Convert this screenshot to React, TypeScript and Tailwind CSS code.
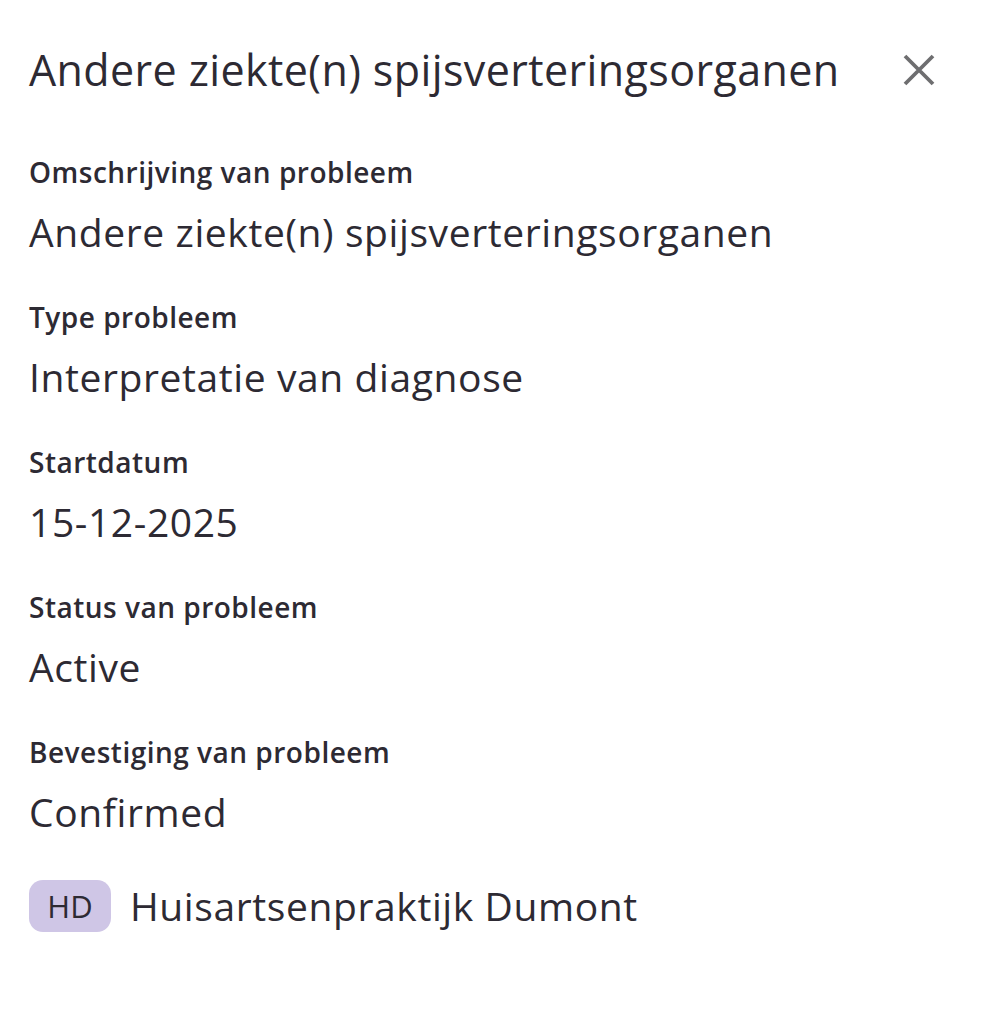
const fields = [
  { label: "Omschrijving van probleem", value: "Andere ziekte(n) spijsverteringsorganen" },
  { label: "Type probleem", value: "Interpretatie van diagnose" },
  { label: "Startdatum", value: "15-12-2025" },
  { label: "Status van probleem", value: "Active" },
  { label: "Bevestiging van probleem", value: "Confirmed" },
];

export default function App() {
  return (
    <div
      className="min-h-screen bg-white px-[29px] pt-[42px] text-[#2d2a33]"
      style={{ fontFamily: '"Open Sans", "Noto Sans", sans-serif' }}
    >
      <div className="flex items-center justify-between">
        <h2 className="text-[43px] leading-[56px] font-medium tracking-[0.4px]">
          Andere ziekte(n) spijsverteringsorganen
        </h2>
        <button className="mr-[14px] flex h-10 w-10 items-center justify-center text-[#6e6e70]">
          <svg width="32" height="32" viewBox="0 0 32 32" fill="none" stroke="currentColor" strokeWidth="3.8">
            <path d="M2 2 L30 30 M30 2 L2 30" />
          </svg>
        </button>
      </div>

      <div className="mt-[56px] flex flex-col gap-[43px]">
        {fields.map((f) => (
          <div key={f.label} className="flex flex-col gap-[18px]">
            <div className="text-[28px] leading-[36px] font-semibold tracking-[0.5px]">{f.label}</div>
            <div className="text-[39px] leading-[48px] tracking-[0.6px]">{f.value}</div>
          </div>
        ))}
      </div>

      <div className="mt-[44px] flex items-center gap-[19px]">
        <div className="flex h-[52px] w-[82px] items-center justify-center rounded-[14px] bg-[#cfc6e6] text-[31px]">
          HD
        </div>
        <div className="text-[39px] leading-[48px] tracking-[0.6px]">Huisartsenpraktijk Dumont</div>
      </div>
    </div>
  );
}
